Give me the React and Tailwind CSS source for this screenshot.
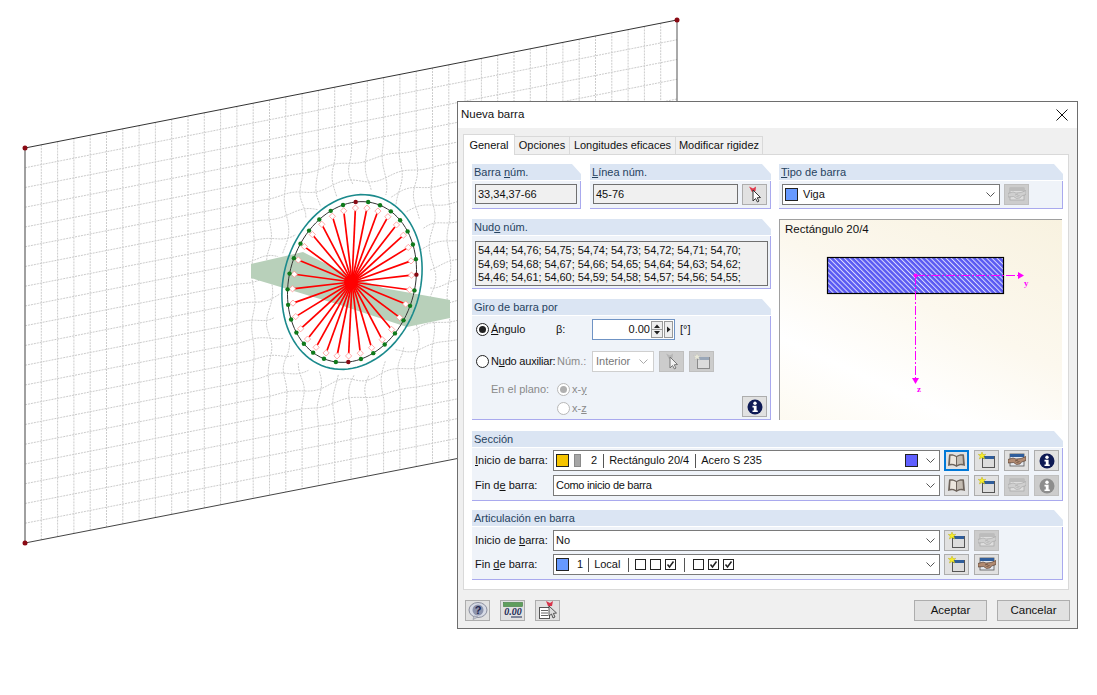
const CX = 352
const CY = 282

// point on the opening's ellipse, k = 1 is the teal outline
function ringPoint(t, k) {
  return [
    CX + k * (70 * Math.cos(t) - 4 * Math.sin(t)),
    CY + k * (-8 * Math.cos(t) + 87 * Math.sin(t)),
  ]
}

function ringPath(k) {
  const pts = []
  for (let i = 0; i <= 96; i++) pts.push(ringPoint((i / 96) * Math.PI * 2, k).join(','))
  return pts.join(' ')
}

// mesh point near the opening gets a small wobble, inside it returns null
function displace(x, y) {
  const dx = x - CX
  const dy = y - CY
  const a = (dx * 87 + dy * 4) / 6058
  const b = (dy * 70 + dx * 8) / 6058
  const r = Math.hypot(a, b)
  if (r < 1.06) return null
  if (r > 1.7) return [x, y]
  const f = (1.7 - r) / 0.64
  return [x + 4 * f * Math.sin(y * 0.11 + x * 0.05), y + 4 * f * Math.sin(x * 0.1 - y * 0.06)]
}

function meshPoint(i, j) {
  return displace(25 + i * 16.3, 148 - i * 3.2 + j * 19.75)
}

function meshLines() {
  const lines = []
  const trace = (fn, steps) => {
    let cur = []
    for (let n = 0; n <= steps; n++) {
      const p = fn(n)
      if (p) cur.push(p.join(','))
      else if (cur.length) {
        lines.push(cur.join(' '))
        cur = []
      }
    }
    if (cur.length) lines.push(cur.join(' '))
  }
  for (let j = 1; j < 20; j++) trace((n) => meshPoint(n / 4, j), 160)
  for (let i = 1; i < 40; i++) trace((n) => meshPoint(i, n / 4), 80)
  return lines
}

function Drawing() {
  const nodes = Array.from({ length: 32 }, (_, i) => (i / 32) * Math.PI * 2)
  const isRed = ([x, y]) => Math.hypot(x - 351, y - 203) < 6 || Math.hypot(x - 416, y - 269) < 6 || Math.hypot(x - 351, y - 360) < 6
  return (
    <svg className="absolute left-0 top-0" width="1097" height="695" viewBox="0 0 1097 695" fill="none">
      {meshLines().map((p, i) => (
        <polyline key={i} points={p} stroke="#cbcbcb" strokeWidth="1" strokeDasharray="2 1" />
      ))}
      <polygon points="251,264 303,252 352,277 383,288 450,300 450,318 407,327 340,305 251,278" fill="#b8d0ba" />
      <polyline points={ringPath(1)} stroke="#1b8a8c" strokeWidth="1.6" />
      <polyline points={ringPath(0.92)} stroke="#333" strokeWidth="1" />
      {nodes.map((t, i) => {
        const [x, y] = ringPoint(t, 0.82)
        const [ex, ey] = ringPoint(t, 0.85)
        return (
          <g key={i}>
            <line x1={CX} y1={CY} x2={x} y2={y} stroke="#ff0000" strokeWidth="1.7" />
            <rect x={ex - 2.2} y={ey - 2.2} width="4.4" height="4.4" fill="#fff" stroke="#ff8c8c" strokeWidth="0.7" transform={`rotate(45 ${ex} ${ey})`} />
          </g>
        )
      })}
      <circle cx={CX - 1} cy={CY} r="7" fill="#ff0000" />
      {nodes.map((t, i) => {
        const p = ringPoint(t, 0.92)
        return <circle key={i} cx={p[0]} cy={p[1]} r="2.2" fill={isRed(p) ? '#8a0a14' : '#0f7a1a'} />
      })}
      <line x1="25" y1="148" x2="677" y2="20" stroke="#333" strokeWidth="1" />
      <line x1="25" y1="148" x2="25" y2="543" stroke="#808080" strokeWidth="1.5" />
      <line x1="25" y1="543" x2="460" y2="458" stroke="#444" strokeWidth="1" />
      <line x1="677" y1="20" x2="677" y2="105" stroke="#555" strokeWidth="1" />
      <circle cx="25" cy="148" r="2.5" fill="#8a0a14" />
      <circle cx="677" cy="20" r="2.5" fill="#8a0a14" />
      <circle cx="25" cy="543" r="2.5" fill="#8a0a14" />
    </svg>
  )
}

function PickIcon({ off }) {
  return (
    <svg width="16" height="17" viewBox="0 0 16 17">
      <path d="M2 0.5 L6 2.5 L9 0.5 L8.5 5 L5 6 Z" fill={off ? '#b5b5b5' : '#e0384a'} />
      <path d="M6 4 L6 15 L8.5 12.5 L10.5 16 L12 15 L10.2 11.8 L13.5 11.5 Z" fill={off ? '#f2f2f2' : '#fff'} stroke={off ? '#777' : '#333'} strokeWidth="1" />
    </svg>
  )
}

function NewIcon({ off }) {
  return (
    <svg width="18" height="17" viewBox="0 0 18 17">
      <rect x="4.5" y="4.5" width="12" height="11" fill="#dcdcdc" stroke={off ? '#8a8a8a' : '#555'} />
      <rect x="5" y="4" width="11" height="3" fill={off ? '#9aa7b8' : '#2f5d9b'} />
      <path d="M4 0 L5 2.6 L7.8 2.4 L5.8 4.3 L6.8 7 L4 5.6 L1.4 7 L2.2 4.3 L0.2 2.4 L3 2.6 Z" fill={off ? '#e8e8d8' : '#f5ec2a'} stroke={off ? '#bbb' : '#b5a800'} strokeWidth="0.4" />
    </svg>
  )
}

function HandIcon({ off }) {
  return (
    <svg width="18" height="15" viewBox="0 0 18 15">
      <rect x="2" y="1" width="14" height="12" fill={off ? '#dedede' : '#e4e8ef'} stroke={off ? '#aaa' : '#555'} strokeWidth="0.8" />
      <rect x="2" y="1" width="14" height="3" fill={off ? '#bcbcbc' : '#2f5d9b'} />
      <path d="M0 6.5 L5 5 L8 6 L13 5.5 L18 3.5 L18 7.5 L13.5 9 L12 11 L8.5 11.5 L5.5 9.5 L0 10 Z" fill={off ? '#cfcfcf' : '#b08a72'} stroke={off ? '#a5a5a5' : '#4a3326'} strokeWidth="0.6" />
      <path d="M7 8 L10 7 M8.5 9.5 L11.5 8.5" stroke={off ? '#a5a5a5' : '#4a3326'} strokeWidth="0.6" />
    </svg>
  )
}

function BookIcon() {
  return (
    <svg width="19" height="15" viewBox="0 0 19 15">
      <path d="M9.5 3 C7 1 4 1 2 1.5 L1 13 C4 12 7 12 9.5 14 C12 12 15 12 18 13 L17 1.5 C15 1 12 1 9.5 3 Z" fill="#6e645c" />
      <path d="M9 4 C7 2.5 5 2.5 3.5 2.8 L3 11 C5 10.5 7 11 9 12 Z" fill="#ece6dd" />
      <path d="M10 4 C12 2.5 14 2.5 15.5 2.8 L16 11 C14 10.5 12 11 10 12 Z" fill="#c4bcb2" />
    </svg>
  )
}

function InfoIcon({ off }) {
  return (
    <svg width="16" height="16" viewBox="0 0 16 16">
      <circle cx="8" cy="8" r="7.5" fill={off ? '#8d8d8d' : '#0e1a55'} />
      <circle cx="8" cy="4.2" r="1.7" fill="#fff" />
      <path d="M5.5 6.8 H9.6 V11.4 H10.8 V13 H5.5 V11.4 H6.8 V8.4 H5.5 Z" fill="#fff" />
    </svg>
  )
}

function HelpIcon() {
  return (
    <svg width="20" height="18" viewBox="0 0 20 18">
      <ellipse cx="10" cy="8" rx="9" ry="7.5" fill="#d7dbe6" stroke="#8b8f9e" />
      <path d="M6 14 L5 17.5 L10 15 Z" fill="#c5c9d4" stroke="#8b8f9e" strokeWidth="0.6" />
      <circle cx="10" cy="8" r="5.5" fill="#8d94ad" />
      <text x="10" y="12" textAnchor="middle" fontFamily="Liberation Sans" fontWeight="700" fontSize="11" fill="#1d2550">?</text>
    </svg>
  )
}

function UnitsIcon() {
  return (
    <svg width="20" height="17" viewBox="0 0 20 17">
      <rect x="0.5" y="0.5" width="19" height="4" fill="#5f9e5c" stroke="#3e7a3e" strokeWidth="0.6" />
      <text x="10" y="13" textAnchor="middle" fontFamily="Liberation Serif" fontStyle="italic" fontWeight="700" fontSize="10" fill="#1c2a55">0.00</text>
      <line x1="8" y1="15" x2="19" y2="15" stroke="#1c2a55" />
    </svg>
  )
}

function DocPickIcon() {
  return (
    <svg width="20" height="19" viewBox="0 0 20 19">
      <path d="M8 0 L12 2 L15 0 L14 5 L10 5 Z" fill="#d8344a" />
      <rect x="1.5" y="6.5" width="10" height="11" fill="#fff" stroke="#555" />
      <path d="M3 9.5 H10 M3 12 H10 M3 14.5 H10" stroke="#666" />
      <path d="M11 5 L11 15 L13.5 13 L15 17 L17 16 L15.4 12.4 L18.5 12 Z" fill="#dcdcdc" stroke="#333" strokeWidth="0.8" />
    </svg>
  )
}

function Chevron({ off }) {
  return (
    <svg width="9" height="5" viewBox="0 0 9 5" fill="none" className="shrink-0">
      <polyline points="0.5,0.5 4.5,4.5 8.5,0.5" stroke={off ? '#aaa' : '#555'} strokeWidth="1" />
    </svg>
  )
}

function Btn({ children, off, focus }) {
  if (focus) {
    return <div className="flex h-[21px] w-[25px] shrink-0 items-center justify-center border-2 border-[#0078d7] bg-[#e1e1e1]">{children}</div>
  }
  if (off) {
    return <div className="flex h-[21px] w-[25px] shrink-0 items-center justify-center border border-[#bfbfbf] bg-[#cccccc]">{children}</div>
  }
  return <div className="flex h-[21px] w-[25px] shrink-0 items-center justify-center border border-[#adadad] bg-[#e1e1e1]">{children}</div>
}

function Group({ title, className, children }) {
  return (
    <div className={`flex flex-col [clip-path:polygon(0_0,calc(100%-9px)_0,100%_10px,100%_100%,0_100%)] ${className}`}>
      <div className="h-[16px] shrink-0 bg-[#dbe5f3] pl-[2px] leading-[16px] text-[#27435f]">{title}</div>
      <div className="mt-[1px] flex min-h-0 flex-1 flex-col border-r border-b border-[#a9a9ee] bg-[#eff3f9] px-[3px]">{children}</div>
    </div>
  )
}

function ReadOnly({ className, children }) {
  return <div className={`flex h-[20px] items-center border border-[#707070] bg-[#f0f0f0] pl-[2px] ${className}`}>{children}</div>
}

function Select({ className, children }) {
  return (
    <div className={`flex h-[21px] items-center border border-[#7a7a7a] bg-white pr-[4px] pl-[2px] ${className}`}>
      <div className="flex min-w-0 flex-1 items-center">{children}</div>
      <Chevron />
    </div>
  )
}

function Swatch({ className }) {
  return <span className={`h-[13px] w-[13px] shrink-0 border border-[#222] ${className}`} />
}

function Sep({ className }) {
  return <span className={`h-[14px] w-px shrink-0 bg-[#555] ${className}`} />
}

function Radio({ on, off, className }) {
  return (
    <span className={`flex h-[13px] w-[13px] shrink-0 items-center justify-center rounded-full border bg-white ${off ? 'border-[#b8b8b8]' : 'border-[#222]'} ${className || ''}`}>
      {on && <span className={`h-[7px] w-[7px] rounded-full ${off ? 'bg-[#b0b0b0]' : 'bg-[#222]'}`} />}
    </span>
  )
}

function Box({ on, className }) {
  return (
    <span className={`flex h-[11px] w-[11px] shrink-0 items-center justify-center border border-[#222] bg-white ${className || ''}`}>
      {on && (
        <svg width="9" height="9" viewBox="0 0 9 9" fill="none">
          <polyline points="1.5,4.5 3.5,7 7.5,1.5" stroke="#222" strokeWidth="1.5" />
        </svg>
      )}
    </span>
  )
}

function Row({ label, children, buttons }) {
  return (
    <div className="flex h-[21px] items-center">
      <div className="w-[78px] shrink-0 whitespace-nowrap">{label}</div>
      {children}
      <div className="ml-[4px] flex gap-[5px]">{buttons}</div>
    </div>
  )
}

function Preview() {
  return (
    <div className="h-[201px] w-[283px] border-t border-l border-[#a0a0a0] bg-[linear-gradient(205deg,#f8f2e0_0%,#fcf8ee_45%,#ffffff_75%,#fdfaf1_100%)]">
      <div className="h-[19px] pl-[5px] text-[11.5px] leading-[18px] text-[#111]">Rectángulo 20/4</div>
      <svg width="282" height="181" viewBox="780 239 282 181" fill="none" className="block">
        <defs>
          <pattern id="hatch" width="3.6" height="3.6" patternUnits="userSpaceOnUse" patternTransform="rotate(-45)">
            <rect width="3.6" height="3.6" fill="#5a5af2" />
            <rect width="1" height="3.6" fill="#dcdcff" />
          </pattern>
        </defs>
        <rect x="827.5" y="257.5" width="176" height="36" fill="url(#hatch)" stroke="#000" strokeWidth="1.2" />
        <line x1="916" y1="275.5" x2="1018" y2="275.5" stroke="#ff00ff" strokeDasharray="9 2 2 2" />
        <line x1="915.5" y1="276" x2="915.5" y2="378" stroke="#ff00ff" strokeDasharray="9 2 2 2" />
        <circle cx="915.5" cy="275.5" r="2" fill="#ff00ff" />
        <polygon points="1018,272 1024,275.5 1018,279" fill="#ff00ff" />
        <polygon points="912,378 919,378 915.5,384" fill="#ff00ff" />
        <text x="1024" y="286" fontFamily="Liberation Serif" fontWeight="700" fontSize="9" fill="#ff00ff">y</text>
        <text x="917" y="392" fontFamily="Liberation Serif" fontWeight="700" fontSize="9" fill="#ff00ff">z</text>
      </svg>
    </div>
  )
}

function Tab({ children, active, className }) {
  if (active) {
    return <div className={`relative z-10 mb-[-1px] flex h-[21px] items-center justify-center border border-b-0 border-[#d9d9d9] bg-white ${className}`}>{children}</div>
  }
  return <div className={`flex h-[18px] items-center justify-center border border-b-0 border-l-0 border-[#d9d9d9] bg-[#f0f0f0] ${className}`}>{children}</div>
}

export default function App() {
  return (
    <div className="relative h-[695px] w-[1097px] overflow-hidden bg-white font-['Liberation_Sans',Arial,sans-serif] text-[11px] text-[#111]">
      <Drawing />

      <div className="absolute left-[457px] top-[101px] flex h-[528px] w-[621px] flex-col border border-[#6e6e6e] bg-[#f0f0f0]">
        {/* Title bar */}
        <div className="flex h-[26px] shrink-0 items-center justify-between bg-white pr-[9px] pl-[3px]">
          <span className="text-[11.5px]">Nueva barra</span>
          <svg width="12" height="12" viewBox="0 0 12 12" fill="none">
            <path d="M0.5 0.5 L11.5 11.5 M11.5 0.5 L0.5 11.5" stroke="#111" />
          </svg>
        </div>

        {/* Tabs */}
        <div className="relative z-10 mt-[6px] flex h-[20px] shrink-0 items-end pl-[5px]">
          <Tab active className="w-[52px]">General</Tab>
          <Tab className="w-[55px]">Opciones</Tab>
          <Tab className="w-[106px]">Longitudes eficaces</Tab>
          <Tab className="w-[87px]">Modificar rigidez</Tab>
        </div>

        {/* Tab page */}
        <div className="ml-[5px] flex h-[436px] w-[606px] shrink-0 flex-col border border-[#d9d9d9] bg-white pt-[9px] pl-[8px]">
          <div className="flex gap-[8px]">
            <div className="flex w-[299px] flex-col gap-[10px]">
              <div className="flex gap-[9px]">
                <Group title={<>Barra <u>n</u>úm.</>} className="h-[45px] w-[109px]">
                  <ReadOnly className="mt-[3px] w-[102px]">33,34,37-66</ReadOnly>
                </Group>
                <Group title={<><u>L</u>ínea núm.</>} className="h-[45px] w-[181px]">
                  <div className="mt-[3px] flex gap-[4px]">
                    <ReadOnly className="w-[146px]">45-76</ReadOnly>
                    <Btn><PickIcon /></Btn>
                  </div>
                </Group>
              </div>

              <Group title={<>Nud<u>o</u> núm.</>} className="h-[70px] w-[299px]">
                <div className="mt-[5px] h-[45px] w-[293px] border border-[#707070] bg-[#f0f0f0] pt-[2px] pl-[2px] leading-[13.5px] tracking-[-0.06px] whitespace-nowrap">
                  <div>54,44; 54,76; 54,75; 54,74; 54,73; 54,72; 54,71; 54,70;</div>
                  <div>54,69; 54,68; 54,67; 54,66; 54,65; 54,64; 54,63; 54,62;</div>
                  <div>54,46; 54,61; 54,60; 54,59; 54,58; 54,57; 54,56; 54,55;</div>
                </div>
              </Group>

              <Group title="Giro de barra por" className="h-[121px] w-[299px]">
                <div className="mt-[3px] flex h-[21px] items-center pl-[1px]">
                  <Radio on />
                  <span className="ml-[2px] w-[65px]"><u>Á</u>ngulo</span>
                  <span className="w-[36px]">β:</span>
                  <div className="flex h-[21px] w-[83px] items-center justify-end border border-[#6f93c4] bg-white pr-[1px]">
                    <span className="mr-[1px]">0.00</span>
                    <div className="flex h-[17px] w-[12px] flex-col border border-[#999] bg-[#eee]">
                      <svg width="10" height="15" viewBox="0 0 10 15"><path d="M2 6 L5 2.5 L8 6 Z M2 9 L5 12.5 L8 9 Z" fill="#222" /><line x1="0" y1="7.5" x2="10" y2="7.5" stroke="#999" /></svg>
                    </div>
                    <div className="ml-[1px] flex h-[17px] w-[9px] items-center justify-center border border-[#999] bg-[#eee]">
                      <svg width="5" height="7" viewBox="0 0 5 7"><path d="M1 0.5 L4.5 3.5 L1 6.5 Z" fill="#222" /></svg>
                    </div>
                  </div>
                  <span className="ml-[5px]">[°]</span>
                </div>

                <div className="mt-[11px] flex h-[21px] items-center pl-[1px]">
                  <Radio />
                  <span className="ml-[2px] w-[66px] tracking-[-0.2px] whitespace-nowrap">N<u>u</u>do auxiliar:</span>
                  <span className="w-[35px] text-[#8a8a8a]">Núm.:</span>
                  <div className="flex h-[21px] w-[62px] items-center justify-between border border-[#cfcfcf] bg-white pr-[5px] pl-[3px] text-[#777]">
                    Interior
                    <Chevron off />
                  </div>
                  <div className="ml-[5px] flex gap-[5px]">
                    <Btn off><PickIcon off /></Btn>
                    <Btn off><NewIcon off /></Btn>
                  </div>
                </div>

                <div className="flex flex-1 items-end justify-between pb-[2px]">
                  <div className="mb-[-1px] flex flex-col pl-[16px] text-[#8a8a8a]">
                    <div className="flex h-[19px] items-center">
                      <span className="w-[66px]">En el plano:</span>
                      <Radio on off className="mr-[2px]" />
                      <span>x-<u>y</u></span>
                    </div>
                    <div className="flex h-[19px] items-center pl-[66px]">
                      <Radio off className="mr-[2px]" />
                      <span>x-<u>z</u></span>
                    </div>
                  </div>
                  <Btn><InfoIcon /></Btn>
                </div>
              </Group>
            </div>

            <div className="flex w-[284px] flex-col gap-[10px]">
              <Group title={<><u>T</u>ipo de barra</>} className="h-[45px] w-[284px]">
                <div className="mt-[3px] flex gap-[4px]">
                  <Select className="w-[218px]">
                    <Swatch className="bg-[#6699ff]" />
                    <span className="ml-[5px]">Viga</span>
                  </Select>
                  <Btn off><HandIcon off /></Btn>
                </div>
              </Group>
              <Preview />
            </div>
          </div>

          <Group title="Sección" className="mt-[11px] h-[70px] w-[591px]">
            <div className="mt-[2px] flex flex-col gap-[4px]">
              <Row
                label={<><u>I</u>nicio de barra:</>}
                buttons={<><Btn focus><BookIcon /></Btn><Btn><NewIcon /></Btn><Btn><HandIcon /></Btn><Btn><InfoIcon /></Btn></>}
              >
                <Select className="w-[387px]">
                  <Swatch className="bg-[#f5c400]" />
                  <span className="ml-[5px] h-[13px] w-[7px] shrink-0 border border-[#8a8a8a] bg-[#a6a6a6]" />
                  <span className="ml-[10px]">2</span>
                  <Sep className="ml-[6px]" />
                  <span className="ml-[5px]">Rectángulo 20/4</span>
                  <Sep className="ml-[6px]" />
                  <span className="ml-[5px]">Acero S 235</span>
                  <Swatch className="mr-[8px] ml-auto bg-[#6060ff]" />
                </Select>
              </Row>
              <Row
                label={<>Fin d<u>e</u> barra:</>}
                buttons={<><Btn><BookIcon /></Btn><Btn><NewIcon /></Btn><Btn off><HandIcon off /></Btn><Btn off><InfoIcon off /></Btn></>}
              >
                <Select className="w-[387px]"><span className="tracking-[-0.3px]">Como inicio de barra</span></Select>
              </Row>
            </div>
          </Group>

          <Group title="Articulación en barra" className="mt-[9px] h-[70px] w-[591px]">
            <div className="mt-[3px] flex flex-col gap-[3px]">
              <Row
                label={<>Inicio de <u>b</u>arra:</>}
                buttons={<><Btn><NewIcon /></Btn><Btn off><HandIcon off /></Btn></>}
              >
                <Select className="w-[387px]">No</Select>
              </Row>
              <Row
                label={<>Fin <u>d</u>e barra:</>}
                buttons={<><Btn><NewIcon /></Btn><Btn><HandIcon /></Btn></>}
              >
                <Select className="w-[387px]">
                  <Swatch className="bg-[#6699ff]" />
                  <span className="ml-[8px]">1</span>
                  <Sep className="ml-[5px]" />
                  <span className="ml-[5px]">Local</span>
                  <Sep className="ml-[8px]" />
                  <Box className="ml-[6px]" />
                  <Box className="ml-[4px]" />
                  <Box on className="ml-[4px]" />
                  <Sep className="ml-[8px]" />
                  <Box className="ml-[8px]" />
                  <Box on className="ml-[4px]" />
                  <Box on className="ml-[4px]" />
                </Select>
              </Row>
            </div>
          </Group>
        </div>

        {/* Footer */}
        <div className="mt-[10px] flex items-center pr-[7px] pl-[7px] text-[11.5px]">
          <div className="flex gap-[10px]">
            <Btn><HelpIcon /></Btn>
            <Btn><UnitsIcon /></Btn>
            <Btn><DocPickIcon /></Btn>
          </div>
          <div className="ml-auto flex gap-[10px]">
            <div className="flex h-[21px] w-[73px] items-center justify-center border border-[#adadad] bg-[#e1e1e1]">Aceptar</div>
            <div className="flex h-[21px] w-[73px] items-center justify-center border border-[#adadad] bg-[#e1e1e1]">Cancelar</div>
          </div>
        </div>
      </div>
    </div>
  )
}
